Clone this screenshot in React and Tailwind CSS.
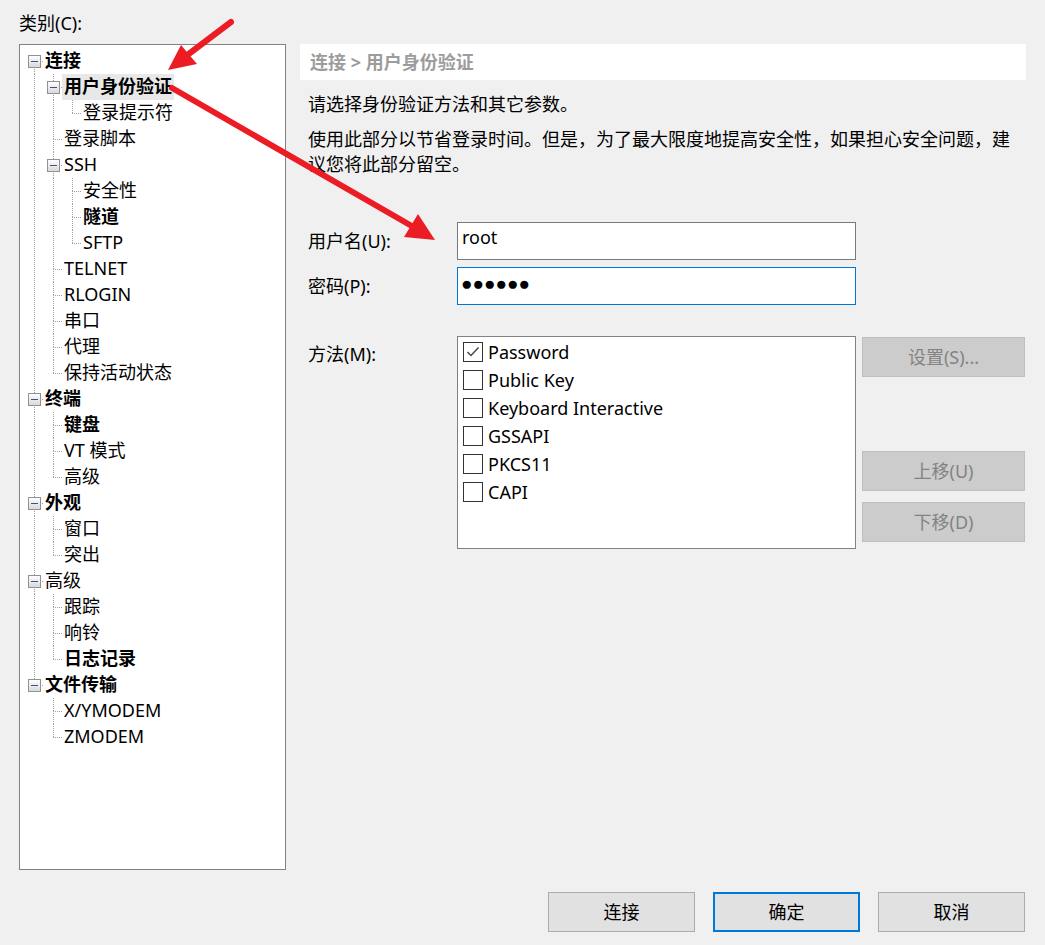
import React from 'react';

const tree = [
  { t: '连接', b: 1, c: [
    { t: '用户身份验证', b: 1, sel: 1, c: [{ t: '登录提示符' }] },
    { t: '登录脚本' },
    { t: 'SSH', c: [{ t: '安全性' }, { t: '隧道', b: 1 }, { t: 'SFTP' }] },
    { t: 'TELNET' },
    { t: 'RLOGIN' },
    { t: '串口' },
    { t: '代理' },
    { t: '保持活动状态' },
  ] },
  { t: '终端', b: 1, c: [{ t: '键盘', b: 1 }, { t: 'VT 模式' }, { t: '高级' }] },
  { t: '外观', b: 1, c: [{ t: '窗口' }, { t: '突出' }] },
  { t: '高级', c: [{ t: '跟踪' }, { t: '响铃' }, { t: '日志记录', b: 1 }] },
  { t: '文件传输', b: 1, c: [{ t: 'X/YMODEM' }, { t: 'ZMODEM' }] },
];

const flatten = (nodes, level = 0, cont = [], rows = []) => {
  nodes.forEach((n, i) => {
    const last = i === nodes.length - 1;
    rows.push({ ...n, level, first: level === 0 && i === 0, last, cont });
    if (n.c) flatten(n.c, level + 1, [...cont, !last], rows);
  });
  return rows;
};

const rows = flatten(tree);

const dot = { stroke: '#a0a0a0', strokeWidth: 1, strokeDasharray: '1 1', shapeRendering: 'crispEdges' };

const TreeRow = ({ row }) => {
  const w = 23 + 19 * row.level;
  const cx = 14 + 19 * row.level;
  return (
    <div className="flex items-center h-[26px]">
      <svg width={w} height="26" className="shrink-0">
        {row.cont.map((c, a) =>
          c ? <line key={a} x1={14.5 + 19 * a} y1="0" x2={14.5 + 19 * a} y2="26" style={dot} /> : null
        )}
        {!row.first && <line x1={cx + 0.5} y1="0" x2={cx + 0.5} y2="13" style={dot} />}
        {!row.last && <line x1={cx + 0.5} y1="13" x2={cx + 0.5} y2="26" style={dot} />}
        <line x1={cx} y1="13.5" x2={cx + 10} y2="13.5" style={dot} />
        {row.c && (
          <g shapeRendering="crispEdges">
            <defs>
              <linearGradient id="bx" x1="0" y1="0" x2="0" y2="1">
                <stop offset="0" stopColor="#ffffff" />
                <stop offset="1" stopColor="#d8d8d8" />
              </linearGradient>
            </defs>
            <rect x={cx - 5.5} y="7.5" width="12" height="12" fill="url(#bx)" stroke="#919191" />
            <line x1={cx - 3} y1="13.5" x2={cx + 4} y2="13.5" stroke="#3c4f93" />
          </g>
        )}
      </svg>
      <span
        className={`h-[26px] leading-[25px] px-[2px] whitespace-nowrap ${row.b ? 'font-bold' : ''} ${row.sel ? 'bg-[#e8e8e8]' : ''}`}
      >
        {row.t}
      </span>
    </div>
  );
};

const methods = [
  { t: 'Password', on: true },
  { t: 'Public Key' },
  { t: 'Keyboard Interactive' },
  { t: 'GSSAPI' },
  { t: 'PKCS11' },
  { t: 'CAPI' },
];

const Checkbox = ({ on }) => (
  <div className="w-[20px] h-[20px] border border-[#333333] bg-white flex items-center justify-center shrink-0">
    {on && (
      <svg width="16" height="16" viewBox="0 0 16 16">
        <polyline points="2.5,8 6,11.5 13.5,3.5" fill="none" stroke="#4a4a4a" strokeWidth="1.5" />
      </svg>
    )}
  </div>
);

const DisabledBtn = ({ children, className = '' }) => (
  <div className={`h-[40px] w-[163px] bg-[#cccccc] border border-[#bfbfbf] text-[#838383] flex items-center justify-center ${className}`}>
    {children}
  </div>
);

const App = () => {
  return (
    <div className="relative w-[1045px] h-[945px] bg-[#f0f0f0] text-black text-[18px] font-['Noto_Sans','Noto_Sans_CJK_SC',sans-serif] overflow-hidden">
      <div className="h-[44px] pl-[19px] pt-[8px] leading-[30px]">类别(C):</div>

      <div className="flex pl-[19px]">
        {/* category tree */}
        <div className="w-[267px] h-[826px] border border-[#828282] bg-white pt-[3px]">
          {rows.map((r, i) => (
            <TreeRow key={i} row={r} />
          ))}
        </div>

        {/* settings page */}
        <div className="ml-[14px] w-[726px]">
          <div className="h-[36px] bg-white pl-[10px] flex items-center font-bold text-[#9c9c9c]">
            连接 &gt; 用户身份验证
          </div>
          <p className="pl-[8px] mt-[12px] leading-[25px]">请选择身份验证方法和其它参数。</p>
          <p className="pl-[8px] mt-[10px] leading-[25px] w-[718px]">
            使用此部分以节省登录时间。但是，为了最大限度地提高安全性，如果担心安全问题，建议您将此部分留空。
          </p>

          <div className="pl-[8px] mt-[45px]">
            <div className="flex items-center">
              <div className="w-[149px]">用户名(U):</div>
              <div className="w-[399px] h-[38px] border border-[#7a7a7a] bg-white pl-[4px] pt-[2px] leading-[25px]">root</div>
            </div>
            <div className="flex items-center mt-[7px]">
              <div className="w-[149px]">密码(P):</div>
              <div className="w-[399px] h-[38px] border border-[#0078d7] bg-white pl-[3px] pt-[3px] leading-[25px] text-[19px] font-['Liberation_Sans',sans-serif]">
                ●●●●●●
              </div>
            </div>
            <div className="flex mt-[31px]">
              <div className="w-[149px] pt-[6px] leading-[25px]">方法(M):</div>
              <div className="w-[399px] h-[213px] border border-[#828282] bg-white pt-[1px]">
                {methods.map((m) => (
                  <div key={m.t} className="h-[28px] flex items-center pl-[5px] gap-[5px]">
                    <Checkbox on={m.on} />
                    <span className="leading-[25px]">{m.t}</span>
                  </div>
                ))}
              </div>
              <div className="ml-[6px] pt-[1px] flex flex-col">
                <DisabledBtn>设置(S)...</DisabledBtn>
                <DisabledBtn className="mt-[74px]">上移(U)</DisabledBtn>
                <DisabledBtn className="mt-[11px]">下移(D)</DisabledBtn>
              </div>
            </div>
          </div>
        </div>
      </div>

      {/* dialog buttons */}
      <div className="flex justify-end gap-[18px] pr-[20px] mt-[22px]">
        <div className="w-[147px] h-[40px] bg-[#e1e1e1] border border-[#adadad] flex items-center justify-center">连接</div>
        <div className="w-[147px] h-[40px] bg-[#e1e1e1] border-2 border-[#0078d7] flex items-center justify-center">确定</div>
        <div className="w-[147px] h-[40px] bg-[#e1e1e1] border border-[#adadad] flex items-center justify-center">取消</div>
      </div>

      {/* annotation arrows */}
      <svg className="absolute inset-0 pointer-events-none" width="1045" height="945">
        <g stroke="#ec1c24" strokeWidth="6" strokeLinecap="round" fill="#ec1c24">
          <line x1="231" y1="22" x2="186" y2="56" />
          <line x1="172" y1="88" x2="410" y2="225" />
        </g>
        <g fill="#ec1c24">
          <polygon points="168,70 181,45 197,64" />
          <polygon points="435,240 404,237 418,214" />
        </g>
      </svg>
    </div>
  );
};

export default App;
